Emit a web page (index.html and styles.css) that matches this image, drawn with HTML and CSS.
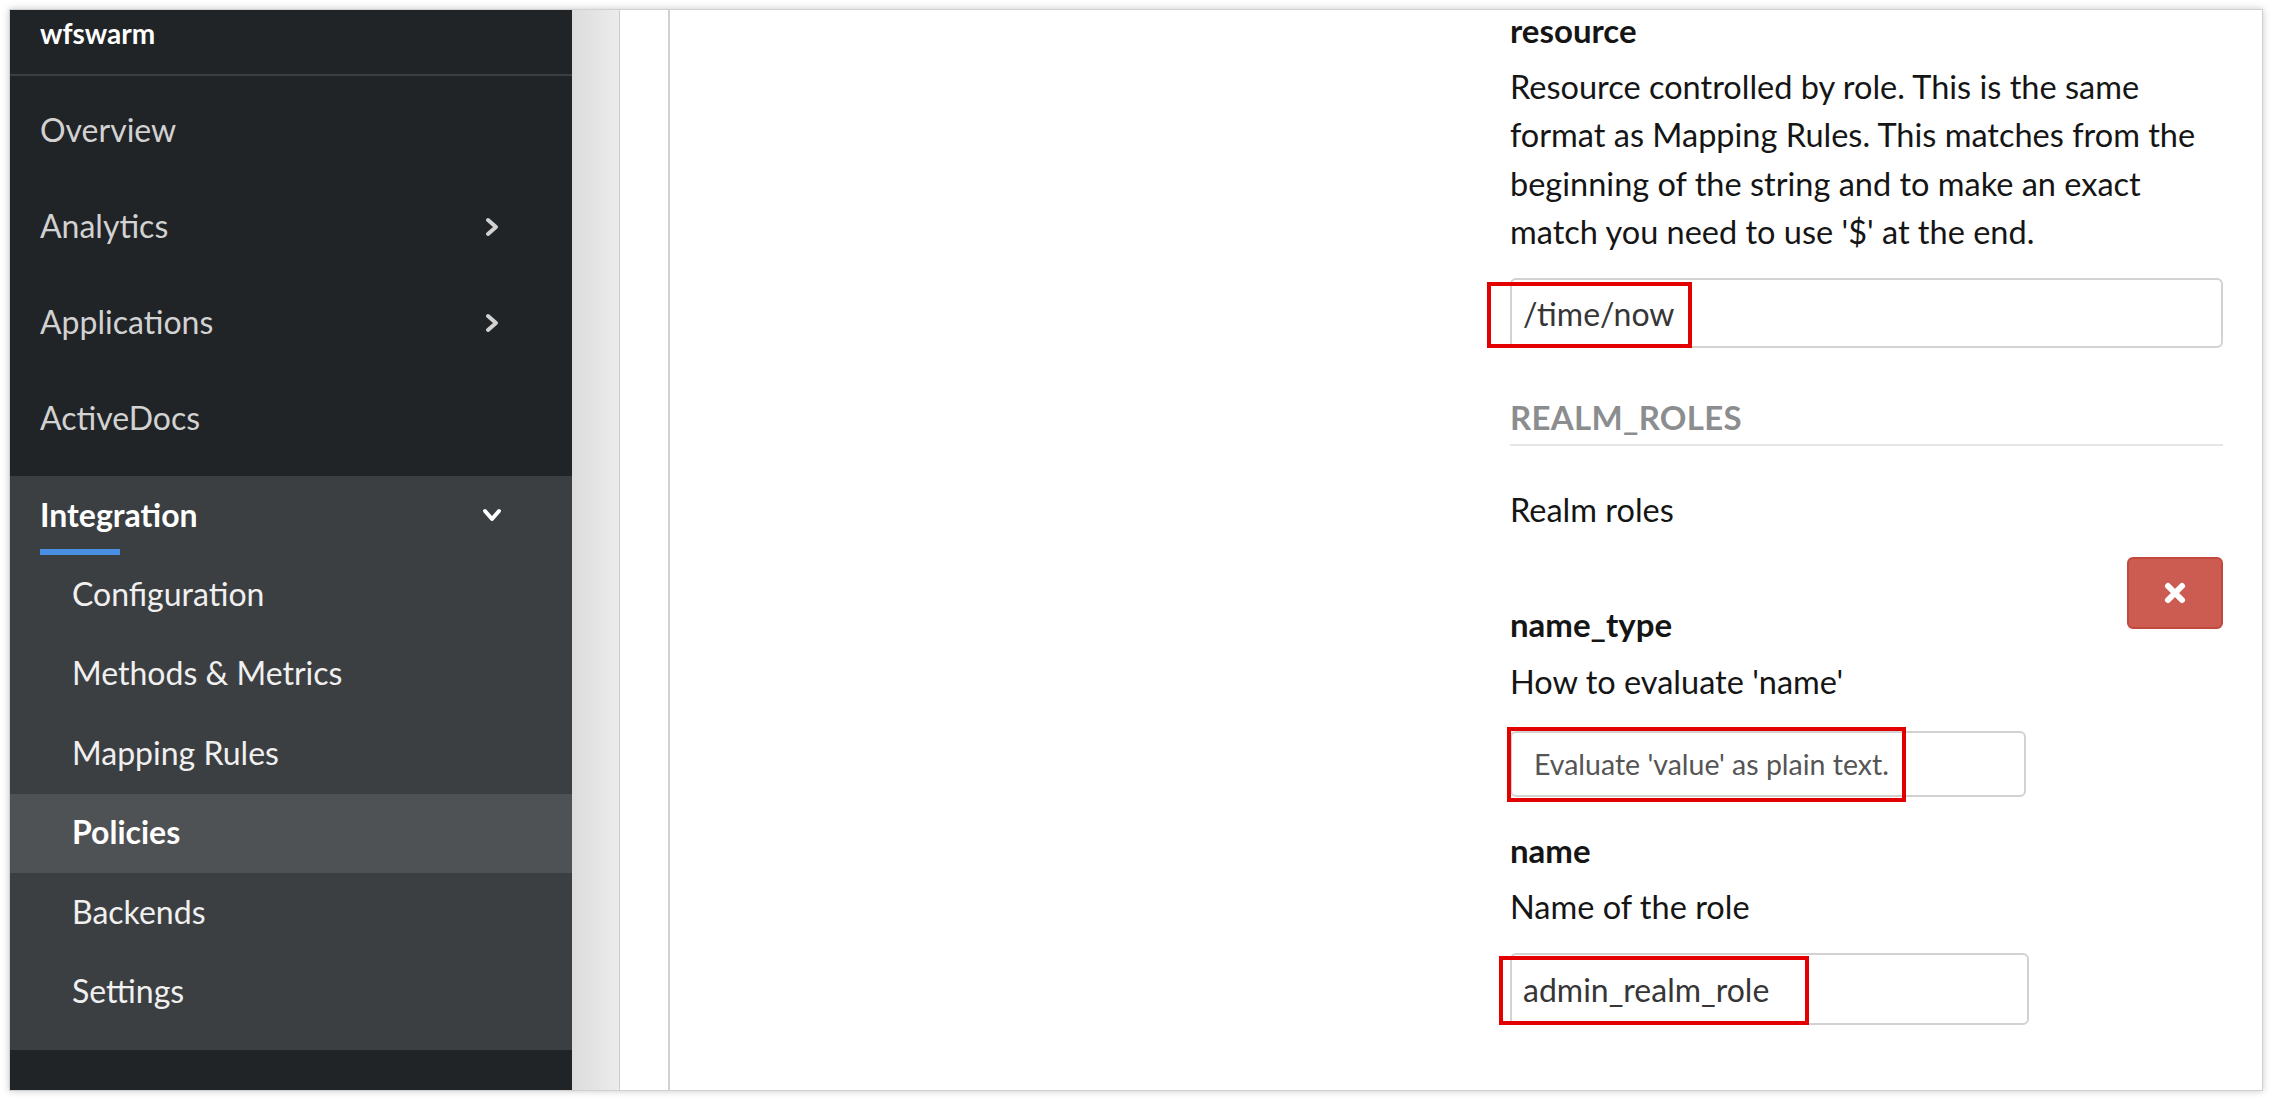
FILE: index.html
```html
<!DOCTYPE html>
<html lang="en">
<head>
<meta charset="utf-8">
<title>Policies</title>
<link rel="stylesheet" href="styles.css">
</head>
<body>
<div class="window">
  <aside class="sidebar">
    <div class="brand">wfswarm</div>
    <nav class="nav">
      <div class="nav-list">
        <a class="nav-item">Overview</a>
        <a class="nav-item">Analytics
          <svg class="chev-right" viewBox="0 0 14 20" width="14" height="20"><polyline points="3,3 11,10 3,17" fill="none" stroke="#d2d2d2" stroke-width="4" stroke-linecap="round" stroke-linejoin="round"/></svg>
        </a>
        <a class="nav-item">Applications
          <svg class="chev-right" viewBox="0 0 14 20" width="14" height="20"><polyline points="3,3 11,10 3,17" fill="none" stroke="#d2d2d2" stroke-width="4" stroke-linecap="round" stroke-linejoin="round"/></svg>
        </a>
        <a class="nav-item">ActiveDocs</a>
      </div>
      <div class="nav-section">
        <div class="section-head">
          <span class="section-title">Integration</span>
          <svg class="chev-down" viewBox="0 0 20 14" width="20" height="14"><polyline points="3,3 10,11 17,3" fill="none" stroke="#ffffff" stroke-width="4" stroke-linecap="round" stroke-linejoin="round"/></svg>
        </div>
        <div class="section-bar"></div>
        <a class="sub-item">Configuration</a>
        <a class="sub-item">Methods &amp; Metrics</a>
        <a class="sub-item">Mapping Rules</a>
        <a class="sub-item is-current">Policies</a>
        <a class="sub-item">Backends</a>
        <a class="sub-item">Settings</a>
      </div>
    </nav>
  </aside>
  <main class="main">
    <div class="strip"></div>
    <div class="gutter"></div>
    <div class="panel">
      <div class="form">
        <div class="label">resource</div>
        <p class="help">Resource controlled by role. This is the same<br>format as Mapping Rules. This matches from the<br>beginning of the string and to make an exact<br>match you need to use '$' at the end.</p>
        <div class="control control-wide">
          <div class="input">/time/now</div>
          <span class="mark mark-resource"></span>
        </div>

        <div class="legend">REALM_ROLES</div>
        <p class="help help-realm">Realm roles</p>

        <div class="item">
          <div class="item-fields">
            <div class="label">name_type</div>
            <p class="help help-tight">How to evaluate 'name'</p>
            <div class="control control-select">
              <div class="select">Evaluate 'value' as plain text.</div>
              <span class="mark mark-select"></span>
            </div>
            <div class="label label-name">name</div>
            <p class="help help-name">Name of the role</p>
            <div class="control control-name">
              <div class="input">admin_realm_role</div>
              <span class="mark mark-name"></span>
            </div>
          </div>
          <div class="item-tools">
            <button class="btn-remove" type="button" aria-label="Remove">
              <svg viewBox="0 0 24 24" width="24" height="24"><path d="M5 5 L19 19 M19 5 L5 19" stroke="#ffffff" stroke-width="6" stroke-linecap="round" fill="none"/></svg>
            </button>
          </div>
        </div>
      </div>
    </div>
  </main>
</div>
</body>
</html>
```
FILE: styles.css
```css
* { box-sizing: border-box; }

html, body {
  margin: 0;
  background: #ffffff;
}

body {
  padding: 10px;
  font-family: Lato, "Liberation Sans", sans-serif;
}

.window {
  width: 2252px;
  height: 1080px;
  display: flex;
  overflow: hidden;
  box-shadow: 0 0 0 1px #d0d0d0, 0 0 7px 1px rgba(0, 0, 0, 0.22);
}

/* ---------- sidebar ---------- */
.sidebar {
  width: 562px;
  flex: none;
  background: #212427;
  display: flex;
  flex-direction: column;
}

.brand {
  height: 66px;
  padding: 3px 0 0 30px;
  line-height: 40px;
  font-size: 28px;
  font-weight: 700;
  color: #ffffff;
  border-bottom: 2px solid #3c3f42;
}

.nav {
  display: flex;
  flex-direction: column;
}

.nav-list {
  padding-top: 7px;
}

.nav-item {
  height: 96px;
  display: flex;
  align-items: center;
  padding: 0 73px 3px 30px;
  font-size: 32px;
  color: #d2d2d2;
}

.chev-right {
  margin-left: auto;
  margin-top: 3px;
}

.nav-section {
  margin-top: 9px;
  background: #3c3f42;
  padding-bottom: 18px;
}

.section-head {
  display: flex;
  align-items: center;
  padding: 16px 70px 0 30px;
  height: 62px;
}

.section-title {
  font-size: 32px;
  line-height: 46px;
  font-weight: 700;
  color: #ffffff;
}

.chev-down {
  margin-left: auto;
}

.section-bar {
  width: 80px;
  height: 6px;
  margin: 11px 0 0 30px;
  background: #4a90e2;
}

.sub-item {
  height: 79.5px;
  display: flex;
  align-items: center;
  padding: 0 0 3px 62px;
  font-size: 32px;
  color: #f0f0f0;
}

.sub-item.is-current {
  background: #4f5255;
  font-weight: 700;
  color: #ffffff;
}

/* ---------- main ---------- */
.main {
  flex: 1;
  display: flex;
  background: #ffffff;
}

.strip {
  width: 48px;
  flex: none;
  background: linear-gradient(to right, #dcdcdc, #ececec);
  border-right: 1px solid #cdcdcd;
}

.gutter {
  width: 48px;
  flex: none;
}

.panel {
  flex: 1;
  border-left: 2px solid #d1d1d1;
  display: flex;
  justify-content: flex-end;
  padding-right: 39px;
}

.form {
  width: 713px;
  margin-top: -3px;
  color: #151515;
}

.label {
  font-size: 33px;
  font-weight: 700;
  line-height: 46px;
}

.help {
  margin: 10px 0 0;
  font-size: 32.5px;
  line-height: 48.3px;
}

.control {
  position: relative;
}

.control-wide {
  margin-top: 22px;
}

.input,
.select {
  display: flex;
  align-items: center;
  border: 2px solid #d2d2d2;
  border-radius: 6px;
  background: #ffffff;
  font-size: 32px;
  color: #363636;
}

.control-wide .input {
  height: 70px;
  padding-left: 11px;
}

.legend {
  margin-top: 48px;
  font-size: 33px;
  letter-spacing: 0.3px;
  font-weight: 700;
  line-height: 43px;
  color: #8b8d8f;
  padding-bottom: 5px;
  border-bottom: 2px solid #e6e6e6;
}

.help-realm {
  margin-top: 40px;
}

.item {
  margin-top: 23px;
  display: flex;
}

.item-fields {
  width: 519px;
  padding-top: 44px;
}

.item-tools {
  flex: 1;
  display: flex;
  justify-content: flex-end;
  align-items: flex-start;
}

.btn-remove {
  width: 96px;
  height: 72px;
  border: 2px solid #c2483e;
  border-radius: 6px;
  background: #cc5c52;
  display: flex;
  align-items: center;
  justify-content: center;
  padding: 0;
}

.help-tight {
  margin-top: 11px;
}

.control-select {
  margin-top: 24px;
  width: 516px;
}

.select {
  height: 66px;
  padding-left: 22px;
  font-size: 28.5px;
  color: #555555;
}

.label-name {
  margin-top: 30px;
}

.help-name {
  margin-top: 10px;
}

.control-name {
  margin-top: 22px;
}

.control-name .input {
  height: 72px;
  padding-left: 11px;
}

/* red annotation boxes drawn over the fields */
.mark {
  position: absolute;
  border: 4px solid #e30000;
  pointer-events: none;
}

.mark-resource {
  left: -23px;
  top: 4px;
  width: 205px;
  height: 66px;
}

.mark-select {
  left: -3px;
  top: -4px;
  width: 399px;
  height: 75px;
}

.mark-name {
  left: -11px;
  top: 3px;
  width: 310px;
  height: 69px;
}
```
